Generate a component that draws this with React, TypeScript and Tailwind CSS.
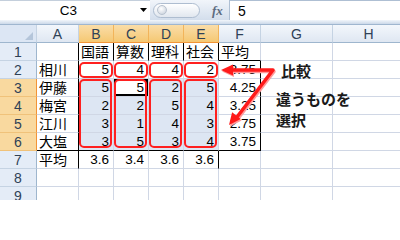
import clsx from 'clsx'

const COLS = ['A', 'B', 'C', 'D', 'E', 'F', 'G', 'H']

const ROWS: string[][] = [
  ['', '国語', '算数', '理科', '社会', '平均', '', ''],
  ['相川', '5', '4', '4', '2', '3.75', '', ''],
  ['伊藤', '5', '5', '2', '5', '4.25', '', ''],
  ['梅宮', '2', '2', '5', '4', '3.25', '', ''],
  ['江川', '3', '1', '4', '3', '2.75', '', ''],
  ['大塩', '3', '5', '3', '4', '3.75', '', ''],
  ['平均', '3.6', '3.4', '3.6', '3.6', '', '', ''],
  ['', '', '', '', '', '', '', ''],
  ['', '', '', '', '', '', '', ''],
]

const SUBJECTS = ['B', 'C', 'D', 'E']

function Cell({ r, c, v }: { r: number; c: number; v: string }) {
  const sel = r >= 3 && r <= 6 && c >= 1 && c <= 4
  const active = r === 3 && c === 2
  const rightBlack =
    (c === 0 && r >= 1 && r <= 7) ||
    (r === 1 && c >= 1 && c <= 4) ||
    (c === 5 && r >= 2 && r <= 6) ||
    (r === 7 && c === 4)
  const bottomBlack = (r === 1 && c === 5) || (r === 6 && c <= 5)
  const isNum = /^[\d.]+$/.test(v)

  return (
    <div
      className={clsx(
        'flex h-[18px] items-center overflow-hidden whitespace-nowrap border-r border-b leading-none text-black',
        rightBlack ? 'border-r-black' : 'border-r-[#d0d7e5]',
        bottomBlack ? 'border-b-black' : 'border-b-[#d0d7e5]',
        sel && !active ? 'bg-[#dde6f3]' : 'bg-white',
        active && 'shadow-[inset_0_0_0_2px_#000]',
        isNum ? 'justify-end pr-[4px] text-[13.5px]' : 'pl-[2px] text-[14px]'
      )}
    >
      {v}
    </div>
  )
}

function FormulaBar() {
  return (
    <div className="flex h-[20px] bg-white">
      <div className="flex w-[150px] items-center border-t border-[#c4cfdc]">
        <span className="w-[137px] text-center text-[13.5px] leading-none text-black">C3</span>
        <svg width="8" height="5" viewBox="0 0 8 5" className="ml-[3px]">
          <polygon points="0,0 7,0 3.5,4" fill="#000" />
        </svg>
      </div>
      <div className="flex w-[79px] items-center bg-gradient-to-b from-[#f1f5fa] to-[#d3deec]">
        <div className="ml-[3px] flex h-[15px] w-[47px] items-center rounded-full border border-[#aebdd0] bg-gradient-to-b from-white to-[#e1e7ef] pl-[3px]">
          <div className="h-[10px] w-[10px] rounded-full border border-[#b7c1ce] bg-[radial-gradient(circle_at_40%_35%,#ffffff,#c3ccd8)]" />
        </div>
        <span className="ml-[12px] font-['Liberation_Serif',serif] text-[13px] font-bold italic leading-none text-[#5d6c80]">
          fx
        </span>
      </div>
      <div className="flex flex-1 items-center border-t border-l border-[#aebfd3] pl-[8px] text-[14px] leading-none text-black">
        5
      </div>
    </div>
  )
}

function Sheet() {
  return (
    <div className="grid grid-cols-[37px_42px_35px_35px_35px_35px_42px_72px_72px]">
      <div className="relative h-[18px] border-r border-b border-r-[#c5d3e3] border-b-[#9eb6ce] bg-[#dce6f4]">
        <svg width="37" height="18" className="absolute inset-0">
          <polygon points="33,7 33,15 25,15" fill="#b4c5da" />
        </svg>
      </div>
      {COLS.map((col, i) => {
        const sel = i >= 1 && i <= 4
        return (
          <div
            key={col}
            className={clsx(
              'flex h-[18px] items-center justify-center border-r border-b text-[14px] leading-none text-[#2f4156]',
              sel
                ? 'border-r-[#f2b45a] border-b-[#f29436] bg-gradient-to-b from-[#fadda8] to-[#f5c872]'
                : 'border-r-[#c5d3e3] border-b-[#9eb6ce] bg-gradient-to-b from-[#f3f7fc] to-[#dfe7f2]'
            )}
          >
            {col}
          </div>
        )
      })}
      {ROWS.map((row, ri) => {
        const r = ri + 1
        const sel = r >= 3 && r <= 6
        return [
          <div
            key={`h${r}`}
            className={clsx(
              'flex h-[18px] items-center justify-center border-r border-b text-[14px] leading-none text-[#2f4156]',
              sel
                ? 'border-r-[#f29436] border-b-[#f0c27a] bg-[#f9d99f]'
                : 'border-r-[#9eb6ce] border-b-[#c5d3e3] bg-[#e4ecf7]'
            )}
          >
            {r}
          </div>,
          ...row.map((v, c) => <Cell key={`${r}-${c}`} r={r} c={c} v={v} />),
        ]
      })}
    </div>
  )
}

// red marker boxes, arrows and the note drawn over the sheet
function Marks() {
  return (
    <div className="pointer-events-none absolute inset-0">
      <div className="absolute left-[79px] top-[62px] flex flex-col gap-[1px]">
        <div className="flex gap-[1px]">
          {SUBJECTS.map((s) => (
            <div key={s} className="h-[16px] w-[34px] rounded-[5px] border-2 border-[#ff2020]" />
          ))}
        </div>
        <div className="flex gap-[2px]">
          {SUBJECTS.map((s) => (
            <div key={s} className="h-[69px] w-[33px] rounded-[5px] border-2 border-[#ff2020]" />
          ))}
        </div>
      </div>

      <svg width="400" height="200" className="absolute inset-0">
        <g transform="translate(1,1.5)" fill="#ff9a9a">
          <polyline points="232,70 273,70 237,117" fill="none" stroke="#ff9a9a" strokeWidth="3.5" strokeLinejoin="round" />
          <polygon points="221,70 233,64.5 233,75.5" />
          <polygon points="229,125 240.7,119 232.1,112.2" />
        </g>
        <g fill="#ff1a1a">
          <polyline points="232,70 273,70 237,117" fill="none" stroke="#ff1a1a" strokeWidth="3.5" strokeLinejoin="round" />
          <polygon points="221,70 233,64.5 233,75.5" />
          <polygon points="229,125 240.7,119 232.1,112.2" />
        </g>
      </svg>

      <div className="absolute left-[276px] top-[64px] flex flex-col items-start text-[15px] font-bold leading-none text-[#1a1a1a]">
        <span className="ml-[5px]">比較</span>
        <span className="mt-[13px]">違うものを</span>
        <span className="mt-[6px]">選択</span>
      </div>
    </div>
  )
}

export default function App() {
  return (
    <div className="relative h-[200px] w-[400px] overflow-hidden bg-white font-['Liberation_Sans','Noto_Sans_CJK_JP',sans-serif]">
      <FormulaBar />
      <div className="h-[5px] border-b border-[#9fb6cf] bg-gradient-to-b from-[#f2f6fb] to-[#cbd8e9]" />
      <Sheet />
      <Marks />
    </div>
  )
}
